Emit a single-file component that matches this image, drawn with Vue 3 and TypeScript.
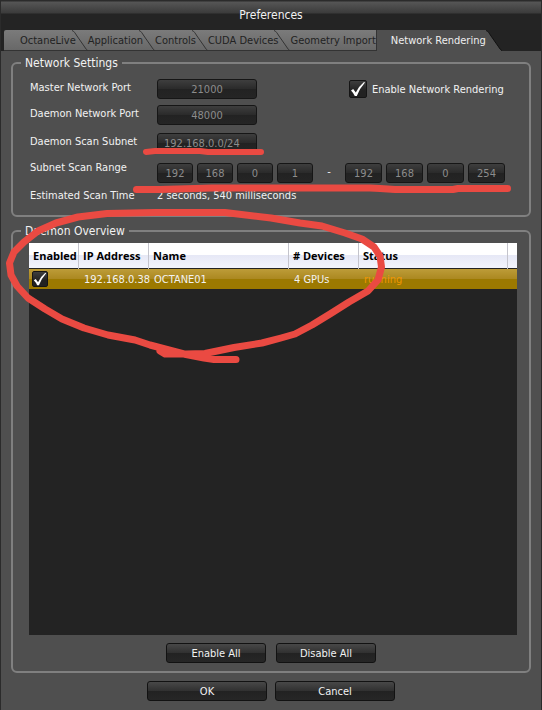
<script setup lang="ts">
import { ref } from 'vue'

interface Daemon {
  enabled: boolean
  ip: string
  name: string
  devices: string
  status: string
}

const tabs: string[] = [
  'OctaneLive',
  'Application',
  'Controls',
  'CUDA Devices',
  'Geometry Import',
  'Network Rendering',
]
const activeTab = ref('Network Rendering')

const masterPort = ref('21000')
const daemonPort = ref('48000')
const subnet = ref('192.168.0.0/24')
const rangeFrom = ref(['192', '168', '0', '1'])
const rangeTo = ref(['192', '168', '0', '254'])
const networkEnabled = ref(true)

const daemons = ref<Daemon[]>([
  { enabled: true, ip: '192.168.0.38', name: 'OCTANE01', devices: '4 GPUs', status: 'running' },
])

function setAll(enabled: boolean): void {
  daemons.value.forEach((d) => (d.enabled = enabled))
}
</script>

<template>
  <main class="window">
    <h1 class="title">Preferences</h1>

    <nav class="tabs">
      <button
        v-for="tab in tabs"
        :key="tab"
        type="button"
        class="tab"
        :class="{ active: tab === activeTab }"
        @click="activeTab = tab"
      >
        <span class="tab-label">{{ tab }}</span>
        <svg
          v-if="tab !== 'Geometry Import'"
          class="slant"
          :class="{ last: tab === 'Network Rendering' }"
          width="16"
          height="21"
          viewBox="0 0 16 21"
          aria-hidden="true"
        >
          <path class="slant-fill" d="M0 0 C2 1 3 3 5 6 L12 16 C14 19 15 20.5 16 21 H0 Z" />
          <path class="slant-line" d="M0 0.5 C2 1 3 3 5 6 L12 16 C14 19 15 20.5 16 20.5" />
        </svg>
      </button>
    </nav>

    <form class="page" @submit.prevent>
      <fieldset class="group">
        <legend>Network Settings</legend>
        <div class="settings">
          <div class="fields">
            <label for="master-port">Master Network Port</label>
            <input id="master-port" v-model="masterPort" class="field" type="text" />
            <label for="daemon-port">Daemon Network Port</label>
            <input id="daemon-port" v-model="daemonPort" class="field" type="text" />
            <label for="subnet">Daemon Scan Subnet</label>
            <input id="subnet" v-model="subnet" class="field left" type="text" />
            <label for="from-0">Subnet Scan Range</label>
            <div class="range">
              <input
                v-for="(_, i) in rangeFrom"
                :id="'from-' + i"
                :key="'from' + i"
                v-model="rangeFrom[i]"
                class="field octet"
                type="text"
                :aria-label="'Range start, part ' + (i + 1)"
              />
              <span class="dash">-</span>
              <input
                v-for="(_, i) in rangeTo"
                :key="'to' + i"
                v-model="rangeTo[i]"
                class="field octet end"
                type="text"
                :aria-label="'Range end, part ' + (i + 1)"
              />
            </div>
            <span>Estimated Scan Time</span>
            <output>2 seconds, 540 milliseconds</output>
          </div>
          <label class="enable">
            <span class="check">
              <input v-model="networkEnabled" type="checkbox" />
              <svg v-if="networkEnabled" viewBox="0 0 18 18" aria-hidden="true">
                <path d="M2 10.5 L4.2 9 L6.8 12.6 Q9.5 6.5 15 2 L16 2.6 Q11 8 7.8 16 H5.8 Q4.5 13 2 10.5 Z" />
              </svg>
            </span>
            Enable Network Rendering
          </label>
        </div>
      </fieldset>

      <fieldset class="group overview">
        <legend>Daemon Overview</legend>
        <div class="list">
          <table>
            <colgroup>
              <col class="c-enabled" />
              <col class="c-ip" />
              <col class="c-name" />
              <col class="c-devices" />
              <col />
              <col class="c-end" />
            </colgroup>
            <thead>
              <tr>
                <th scope="col">Enabled</th>
                <th scope="col">IP Address</th>
                <th scope="col">Name</th>
                <th scope="col"># Devices</th>
                <th scope="col">Status</th>
                <td></td>
              </tr>
            </thead>
            <tbody>
              <tr v-for="d in daemons" :key="d.ip">
                <td class="tick">
                  <label class="check small">
                    <input v-model="d.enabled" type="checkbox" :aria-label="'Enable ' + d.name" />
                    <svg v-if="d.enabled" viewBox="0 0 18 18" aria-hidden="true">
                      <path d="M2 10.5 L4.2 9 L6.8 12.6 Q9.5 6.5 15 2 L16 2.6 Q11 8 7.8 16 H5.8 Q4.5 13 2 10.5 Z" />
                    </svg>
                  </label>
                </td>
                <td>{{ d.ip }}</td>
                <td>{{ d.name }}</td>
                <td>{{ d.devices }}</td>
                <td class="status">{{ d.status }}</td>
                <td></td>
              </tr>
            </tbody>
          </table>
        </div>
        <div class="actions list-actions">
          <button type="button" class="btn" @click="setAll(true)">Enable All</button>
          <button type="button" class="btn" @click="setAll(false)">Disable All</button>
        </div>
      </fieldset>

      <div class="actions dialog-actions">
        <button type="submit" class="btn wide">OK</button>
        <button type="button" class="btn wide">Cancel</button>
      </div>
    </form>

    <svg class="marker" width="542" height="710" viewBox="0 0 542 710" aria-hidden="true">
      <path class="thin" d="M146 152 L155 151 H200 L208 152 H261" />
      <path d="M136.500 189.500 H160 L212 188 H370 L380 188.500 L395 189.500 H453 L458 188.500 H507.500" />
      <path
        d="M236 359.500 H214 L204 358 L186 354.500 L150 345 L135 340 L108 335 L84 328 L62 319 L45 309 L28 298 L17 286 L11 275 L9.500 263 L14 252 L24 242 L38 231 L56 223 L78 217 L107 213.500 L155 212.500 H225 L271 218 L300 223 L322 226 L345 233 L362 239 L374 247 L380 256 L381.500 267 L378 280 L368 291 L349 302 L330 314 L312 325 L295 334 L281 338 L262 343 L234 347.500 L205 353.500 L186 354 H165 L160 351"
      />
    </svg>
  </main>
</template>

<style>
body {
  margin: 0;
  background: #4f4f4f;
}
</style>

<style scoped>
.window {
  position: relative;
  box-sizing: border-box;
  min-height: 100vh;
  display: flex;
  flex-direction: column;
  background: #232323;
  border: 1px solid #2b2b2b;
  border-top-width: 0;
  color: #f2f2f2;
  font-family: 'DejaVu Sans Condensed', 'DejaVu Sans', sans-serif;
  font-size: 11px;
  line-height: 17px;
  overflow: hidden;
}
button,
input {
  font: inherit;
}
.title,
legend {
  font-size: 12px;
  font-weight: 400;
}
.title {
  margin: 0;
  height: 30px;
  line-height: 30px;
  text-align: center;
  background: linear-gradient(#2b2b2b 1px, #565656 2px, #3b3b3b 13px, #242424 14px);
}
.tabs {
  display: flex;
  height: 21px;
  padding-left: 3px;
}
.tab {
  display: flex;
  padding: 0;
  border: 0;
  background: linear-gradient(#7b7b7b, #686868 20px, #333 20px);
  color: #222;
  white-space: nowrap;
}
.tab:first-child {
  border-top-left-radius: 2px;
}
.tab:first-child .tab-label {
  padding-left: 16px;
}
.tab-label {
  line-height: 22px;
}
.tab.active {
  background: #232323;
  color: #eee;
}
.tab.active .tab-label {
  height: 21px;
  padding-left: 14px;
  background: #4f4f4f;
  border-left: 1px solid #333;
}
.slant {
  margin-left: -4px;
}
.slant.last {
  margin-left: 0;
}
.slant-fill {
  fill: none;
}
.slant-line {
  fill: none;
  stroke: #333;
}
.last .slant-fill {
  fill: #4f4f4f;
}
.last .slant-line {
  stroke: #111;
}
.page {
  flex: 1;
  display: flex;
  flex-direction: column;
  padding: 4px 10px 9px;
  background: #4f4f4f;
}
.group {
  min-width: 0;
  margin: 0;
  padding: 0 12px 8px 8px;
  border: 2px solid #808080;
  border-radius: 6px;
}
legend {
  padding: 0 4px;
  line-height: 16px;
}
.settings {
  display: flex;
  justify-content: space-between;
  padding: 8px 0 3px 9px;
}
.fields {
  display: grid;
  grid-template-columns: 127px 192px;
  grid-template-rows: 26px 28px 26px 28px 17px;
  align-items: start;
  white-space: nowrap;
}
.field {
  box-sizing: border-box;
  width: 100px;
  height: 20px;
  padding: 0 6px;
  border: 1px solid #161616;
  border-radius: 3px;
  background: linear-gradient(#3e3e3e, #2a2a2a 50%, #222 50%, #252525);
  color: #8c8c8c;
  text-align: center;
}
.field.left {
  text-align: left;
}
.range {
  display: flex;
  gap: 4px;
  padding-top: 4px;
}
.field.octet {
  flex: none;
  width: 36px;
  padding: 0;
}
.field.octet.end {
  width: 37px;
}
.dash {
  flex: none;
  width: 24px;
  text-align: center;
}
.enable {
  display: flex;
  align-items: center;
  gap: 5px;
  height: 20px;
  width: 168px;
  white-space: nowrap;
}
.check {
  display: grid;
  width: 18px;
  height: 18px;
}
.check.small {
  width: 16px;
  height: 16px;
}
.check > * {
  grid-area: 1 / 1;
  box-sizing: border-box;
  width: 100%;
  height: 100%;
  margin: 0;
}
.check input {
  appearance: none;
  border: 1px solid #151515;
  border-radius: 2px;
  background: linear-gradient(#3e3e3e, #222 60%);
}
.check svg {
  pointer-events: none;
  fill: #fff;
}
.overview {
  margin-top: 6px;
}
.list {
  min-height: calc(100vh - 318px);
  margin: 4px 0 0 8px;
  background: #232323;
}
table {
  width: 100%;
  table-layout: fixed;
  border-collapse: separate;
  border-spacing: 0;
}
.c-enabled {
  width: 50px;
}
.c-ip {
  width: 70px;
}
.c-name {
  width: 140px;
}
.c-devices {
  width: 70px;
}
.c-end {
  width: 9px;
}
th,
td {
  box-sizing: border-box;
  padding: 0 0 0 4px;
  text-align: left;
  white-space: nowrap;
}
thead tr {
  height: 26px;
  background: linear-gradient(#fff 12px, #e6e8f6 12px, #f3f4fc 25px, #232323 25px);
  color: #000;
}
th {
  border-right: 1px solid #c4c4cc;
  font-family: 'Open Sans', sans-serif;
  line-height: 16px;
}
tbody tr {
  height: 20px;
  background: linear-gradient(#bd9c38, #ab8820 10px, #9c7900 10px);
}
tbody td {
  padding-left: 5px;
}
tbody .tick {
  padding-left: 3px;
}
.status {
  color: #f09600;
}
.actions {
  display: flex;
  justify-content: center;
}
.list-actions {
  gap: 10px;
  padding: 8px 0 0 4px;
}
.dialog-actions {
  gap: 8px;
  padding-top: 8px;
}
.btn {
  box-sizing: border-box;
  width: 100px;
  height: 20px;
  padding: 0;
  border: 1px solid #121212;
  border-radius: 3px;
  background: linear-gradient(#484848, #303030 50%, #222 50%, #262626);
  color: #f2f2f2;
}
.btn.wide {
  width: 120px;
}
.marker {
  position: absolute;
  top: 0;
  left: -1px;
  pointer-events: none;
}
.marker path {
  fill: none;
  stroke: #ea4a42;
  stroke-width: 7;
  stroke-linecap: round;
  stroke-linejoin: round;
}
.marker .thin {
  stroke-width: 6;
}
</style>
